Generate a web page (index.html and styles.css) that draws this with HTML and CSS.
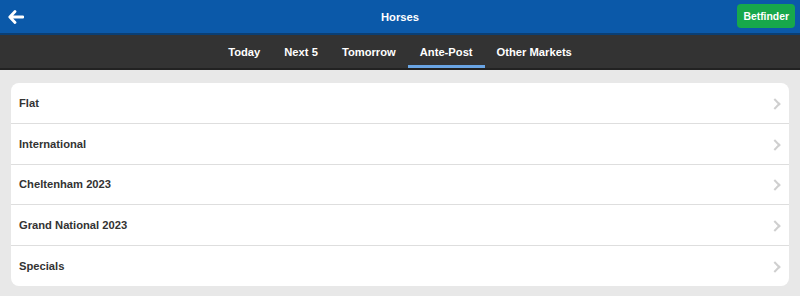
FILE: index.html
```html
<!DOCTYPE html>
<html lang="en">
<head>
  <meta charset="UTF-8" />
  <meta name="viewport" content="width=device-width, initial-scale=1.0" />
  <title>Horses</title>
  <link rel="stylesheet" href="styles.css">
</head>
<body>
  <header class="topbar">
    <a class="back" href="#">
      <svg width="16" height="14" viewBox="0 0 16 14">
        <path d="M7 1.5 L1.8 7 L7 12.5 M2 7 H15" fill="none" stroke="#fff" stroke-width="2.8" stroke-linecap="round" stroke-linejoin="round"/>
      </svg>
    </a>
    <h1>Horses</h1>
    <button class="betfinder">Betfinder</button>
  </header>

  <nav class="tabs">
    <a href="#" class="tab">Today</a>
    <a href="#" class="tab">Next 5</a>
    <a href="#" class="tab">Tomorrow</a>
    <a href="#" class="tab active">Ante-Post</a>
    <a href="#" class="tab">Other Markets</a>
  </nav>

  <main class="content">
    <ul class="list">
      <li><a href="#">Flat<span class="chev"></span></a></li>
      <li><a href="#">International<span class="chev"></span></a></li>
      <li><a href="#">Cheltenham 2023<span class="chev"></span></a></li>
      <li><a href="#">Grand National 2023<span class="chev"></span></a></li>
      <li><a href="#">Specials<span class="chev"></span></a></li>
    </ul>
  </main>
</body>
</html>
```

FILE: styles.css
```css
* {
  box-sizing: border-box;
  margin: 0;
  padding: 0;
  font-family: 'Liberation Sans', Arial, sans-serif;
}

body {
  background: #e8e8e8;
  width: 800px;
  height: 296px;
  overflow: hidden;
}

.topbar {
  height: 35px;
  background: #0b59a9;
  border-bottom: 2px solid #0a3f75;
  display: flex;
  align-items: center;
  justify-content: space-between;
  padding: 0 5px 0 8px;
  position: relative;
}

.back {
  display: flex;
  align-items: center;
}

.topbar h1 {
  position: absolute;
  left: 0;
  right: 0;
  top: 11px;
  text-align: center;
  font-size: 11.2px;
  font-weight: bold;
  color: #fff;
  pointer-events: none;
}

.betfinder {
  position: relative;
  height: 24px;
  padding: 0 6px;
  background: #17a84b;
  border: none;
  border-radius: 4px;
  color: #fff;
  font-size: 10.4px;
  font-weight: bold;
  margin-bottom: 1px;
}

.tabs {
  height: 35px;
  background: #333;
  border-bottom: 2px solid #222;
  display: flex;
  justify-content: center;
}

.tab {
  display: flex;
  align-items: center;
  padding: 4px 12px 0;
  color: #fff;
  text-decoration: none;
  font-size: 11.2px;
  font-weight: bold;
  border-bottom: 3px solid transparent;
}

.tab.active {
  border-bottom-color: #6aa5e4;
}

.content {
  padding: 13px 11px 0;
}

.list {
  list-style: none;
  background: #fff;
  border-radius: 8px;
  overflow: hidden;
}

.list li + li {
  border-top: 1px solid #dedede;
}

.list a {
  height: 39.8px;
  display: flex;
  align-items: center;
  justify-content: space-between;
  padding: 0 10px 0 8px;
  color: #333;
  text-decoration: none;
  font-size: 11.2px;
  font-weight: bold;
}

.chev {
  width: 8px;
  height: 8px;
  border-top: 2px solid #cfcfcf;
  border-right: 2px solid #cfcfcf;
  transform: rotate(45deg);
  margin-top: 2px;
}
```
